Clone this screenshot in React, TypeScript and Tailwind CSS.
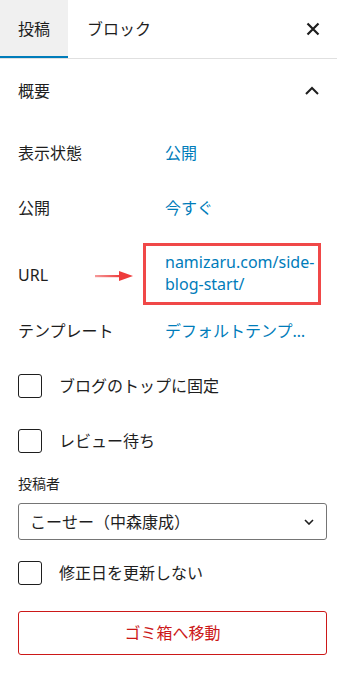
import React from 'react';

const font = { fontFamily: '"Noto Sans", "Noto Sans CJK JP", sans-serif' };

function Checkbox({ label, className = '' }: { label: string; className?: string }) {
  return (
    <label className={`flex items-center h-[24px] ${className}`}>
      <span className="w-[24px] h-[24px] border border-[#1e1e1e] rounded-[3px] bg-white shrink-0" />
      <span className="ml-[17px] text-[16px] text-[#1e1e1e] leading-none">{label}</span>
    </label>
  );
}

function Row({ label, children, className = '' }: { label: string; children: React.ReactNode; className?: string }) {
  return (
    <div className={`flex items-center ${className}`}>
      <div className="w-[147px] shrink-0 text-[16px] text-[#1e1e1e]">{label}</div>
      <div className="text-[16px] text-[#007cba]">{children}</div>
    </div>
  );
}

export default function App() {
  return (
    <div className="w-[337px] h-[673px] bg-white overflow-hidden" style={font}>
      {/* tabs */}
      <div className="flex items-stretch h-[59px] border-b border-[#e0e0e0]">
        <div className="w-[68px] bg-[#f0f0f0] flex items-center justify-center text-[16px] text-[#1e1e1e] shadow-[inset_0_-2px_0_#007cba]">
          投稿
        </div>
        <div className="pl-[19px] flex items-center text-[16px] text-[#1e1e1e]">ブロック</div>
        <div className="ml-auto w-[48px] flex items-center justify-center">
          <svg width="14" height="14" viewBox="0 0 14 14">
            <path d="M1.5 1.5 L12.5 12.5 M12.5 1.5 L1.5 12.5" stroke="#1e1e1e" strokeWidth="2.2" />
          </svg>
        </div>
      </div>

      <div className="pl-[18px] pr-[10px]">
        {/* section header */}
        <div className="flex items-center h-[64px]">
          <span className="text-[16px] text-[#1e1e1e]">概要</span>
          <svg className="ml-auto mr-[7px]" width="16" height="10" viewBox="0 0 16 10">
            <path d="M2 8 L8 2 L14 8" fill="none" stroke="#1e1e1e" strokeWidth="2" />
          </svg>
        </div>

        <div className="pt-[2px]">
          <Row label="表示状態" className="h-[55px]">公開</Row>
          <Row label="公開" className="h-[55px]">今すぐ</Row>

          <div className="flex items-center pt-[8px]">
            <div className="w-[77px] shrink-0 text-[16px] text-[#1e1e1e] pt-[2px]">URL</div>
            <svg className="mt-[4px]" width="40" height="12" viewBox="0 0 40 12">
              <defs>
                <linearGradient id="arrowfade" gradientUnits="userSpaceOnUse" x1="0" y1="6" x2="26" y2="6">
                  <stop offset="0" stopColor="#f59a9a" />
                  <stop offset="1" stopColor="#ee3b3b" />
                </linearGradient>
              </defs>
              <rect x="0" y="5" width="26" height="2.2" fill="url(#arrowfade)" />
              <path d="M24 1 L38 6 L24 11 Z" fill="#ee3b3b" />
            </svg>
            <div className="ml-[8px] w-[178px] h-[62px] border-[3px] border-[#f04848] pl-[19px] pt-[5px] text-[16px] leading-[22px] text-[#007cba]">
              namizaru.com/side-
              <br />
              blog-start/
            </div>
          </div>

          <Row label="テンプレート" className="h-[52px]">
            <div className="w-[142px] truncate">デフォルトテンプレート</div>
          </Row>
        </div>

        <Checkbox label="ブログのトップに固定" className="mt-[17px]" />
        <Checkbox label="レビュー待ち" className="mt-[31px]" />

        <div className="mt-[21px] text-[14px] leading-[20px] text-[#1e1e1e]">投稿者</div>
        <div className="mt-[9px] h-[37px] border border-[#757575] rounded-[3px] flex items-center pl-[11px] pr-[12px]">
          <span className="text-[16px] text-[#1e1e1e]">こーせー（中森康成）</span>
          <svg className="ml-auto" width="10" height="6" viewBox="0 0 10 6">
            <path d="M1 1 L5 5 L9 1" fill="none" stroke="#1e1e1e" strokeWidth="1.6" />
          </svg>
        </div>

        <Checkbox label="修正日を更新しない" className="mt-[21px]" />

        <button className="mt-[26px] w-full h-[44px] border border-[#cc1818] rounded-[3px] text-[16px] text-[#cc1818] bg-white">
          ゴミ箱へ移動
        </button>
      </div>
    </div>
  );
}
